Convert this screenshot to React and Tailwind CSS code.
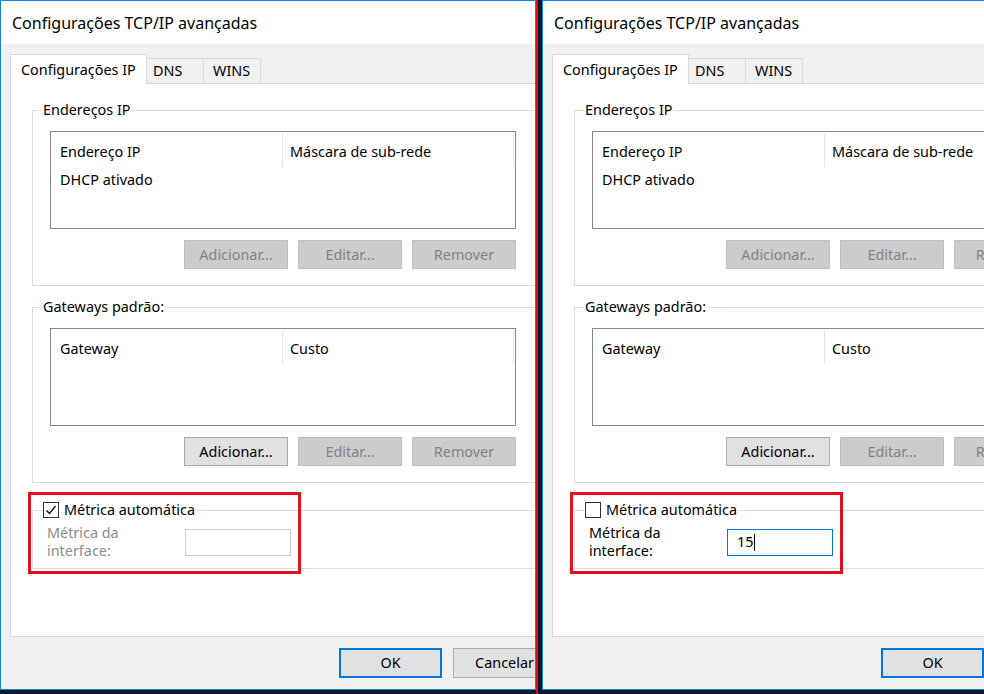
import React from 'react';

const font = { fontFamily: '"Noto Sans", "Open Sans", sans-serif' };

const Btn = ({ children, disabled, focused, className = '' }) => {
  let look = 'bg-[#e1e1e1] border border-[#adadad] text-black';
  if (disabled) look = 'bg-[#cccccc] border border-[#bfbfbf] text-[#838383]';
  if (focused) look = 'bg-[#e1e1e1] border-2 border-[#0078d7] text-black';
  return (
    <div className={`flex items-center justify-center h-[29px] text-[14.4px] leading-[18px] ${look} ${className}`}>
      {children}
    </div>
  );
};

const ListBox = ({ col1, col2, rows = [] }) => (
  <div className="w-[466px] h-[98px] border border-[#828790] bg-white">
    <div className="flex h-[36px] items-center">
      <div className="w-[232px] h-[33px] flex items-center pt-[4px] pl-[9px] border-r border-[#e5e5e5]">{col1}</div>
      <div className="w-[231px] h-[33px] flex items-center pt-[4px] pl-[7px] border-r border-[#e5e5e5]">{col2}</div>
    </div>
    {rows.map((r) => (
      <div key={r} className="pl-[9px] mt-[3px] leading-[18px]">{r}</div>
    ))}
  </div>
);

const Group = ({ legend, children, className = '' }) => (
  <fieldset className={`w-[504px] border border-[#dcdcdc] ${className}`}>
    <legend className="ml-[9px] px-[1px] leading-[18px]">{legend}</legend>
    {children}
  </fieldset>
);

const ListGroup = ({ legend, col1, col2, rows, addEnabled, className }) => (
  <Group legend={legend} className={className}>
    <div className="pl-[17px] pt-[12px] pb-[16px]">
      <ListBox col1={col1} col2={col2} rows={rows} />
      <div className="w-[466px] mt-[11px] flex justify-end gap-[10px]">
        <Btn disabled={!addEnabled} className="w-[104px]">Adicionar...</Btn>
        <Btn disabled className="w-[104px]">Editar...</Btn>
        <Btn disabled className="w-[104px]">Remover</Btn>
      </div>
    </div>
  </Group>
);

const Dialog = ({ auto }) => (
  <div className="relative w-[568px] h-[690px] border border-[#1883d7] bg-[#f0f0f0] text-[14.4px] text-black flex flex-col" style={font}>
    <div className="h-[43px] bg-white flex items-center pl-[11px] text-[16px]">
      Configurações TCP/IP avançadas
    </div>

    <div className="flex items-end h-[39px] pl-[9px]">
      <div className="relative z-10 w-[137px] h-[30px] -mb-[1px] bg-white border border-b-0 border-[#d9d9d9] pl-[10px] flex items-center">
        Configurações IP
      </div>
      <div className="w-[57px] h-[25px] border-t border-r border-[#d9d9d9] pl-[6px] flex items-center">DNS</div>
      <div className="w-[57px] h-[25px] border-t border-r border-[#d9d9d9] pl-[9px] flex items-center">WINS</div>
    </div>

    <div className="ml-[9px] w-[548px] h-[554px] bg-white border border-[#d9d9d9] pl-[21px] pt-[17px]">
      <ListGroup
        legend="Endereços IP"
        col1="Endereço IP"
        col2="Máscara de sub-rede"
        rows={['DHCP ativado']}
      />
      <ListGroup
        legend="Gateways padrão:"
        col1="Gateway"
        col2="Custo"
        addEnabled
        className="mt-[12px]"
      />
      <Group
        className="mt-[18px]"
        legend={
          <span className="flex items-center">
            <span className="w-[16px] h-[16px] border border-[#333333] bg-white flex items-center justify-center">
              {auto && (
                <svg width="12" height="12" viewBox="0 0 12 12">
                  <path d="M1.5 6.5 L4.5 9.5 L10.5 2" fill="none" stroke="#000" strokeWidth="1.3" />
                </svg>
              )}
            </span>
            <span className="ml-[5px]">Métrica automática</span>
          </span>
        }
      >
        <div className="flex items-center pl-[14px] pt-[5px] pb-[8px]">
          <div className={`w-[138px] leading-[18px] ${auto ? 'text-[#8d8d8d]' : 'text-black'}`}>
            Métrica da
            <br />
            interface:
          </div>
          {auto ? (
            <div className="w-[106px] h-[27px] border border-[#cccccc] bg-white" />
          ) : (
            <div className="w-[106px] h-[27px] border border-[#0078d7] bg-white flex items-center pl-[9px]">
              15<span className="w-[1px] h-[17px] bg-black ml-[1px]" />
            </div>
          )}
        </div>
      </Group>
    </div>

    <div className="flex justify-end gap-[11px] pr-[11px] mt-[11px]">
      <Btn focused className="w-[103px] h-[30px]">OK</Btn>
      <Btn className="w-[103px] h-[30px]">Cancelar</Btn>
    </div>

    <div className="absolute left-[27px] top-[491px] w-[273px] h-[82px] border-[3px] border-[#e3101b]" />
  </div>
);

export default function App() {
  return (
    <div className="w-[984px] h-[694px] bg-[#0e1a2b] flex overflow-hidden">
      <div className="w-[536px] h-[690px] overflow-hidden shrink-0 border-r border-[#1883d7]">
        <Dialog auto />
      </div>
      <div className="w-[2px] h-[694px] bg-[#e3101b] shrink-0" />
      <div className="w-[4px] shrink-0" />
      <div className="flex-1 h-[690px] overflow-hidden">
        <Dialog auto={false} />
      </div>
    </div>
  );
}
